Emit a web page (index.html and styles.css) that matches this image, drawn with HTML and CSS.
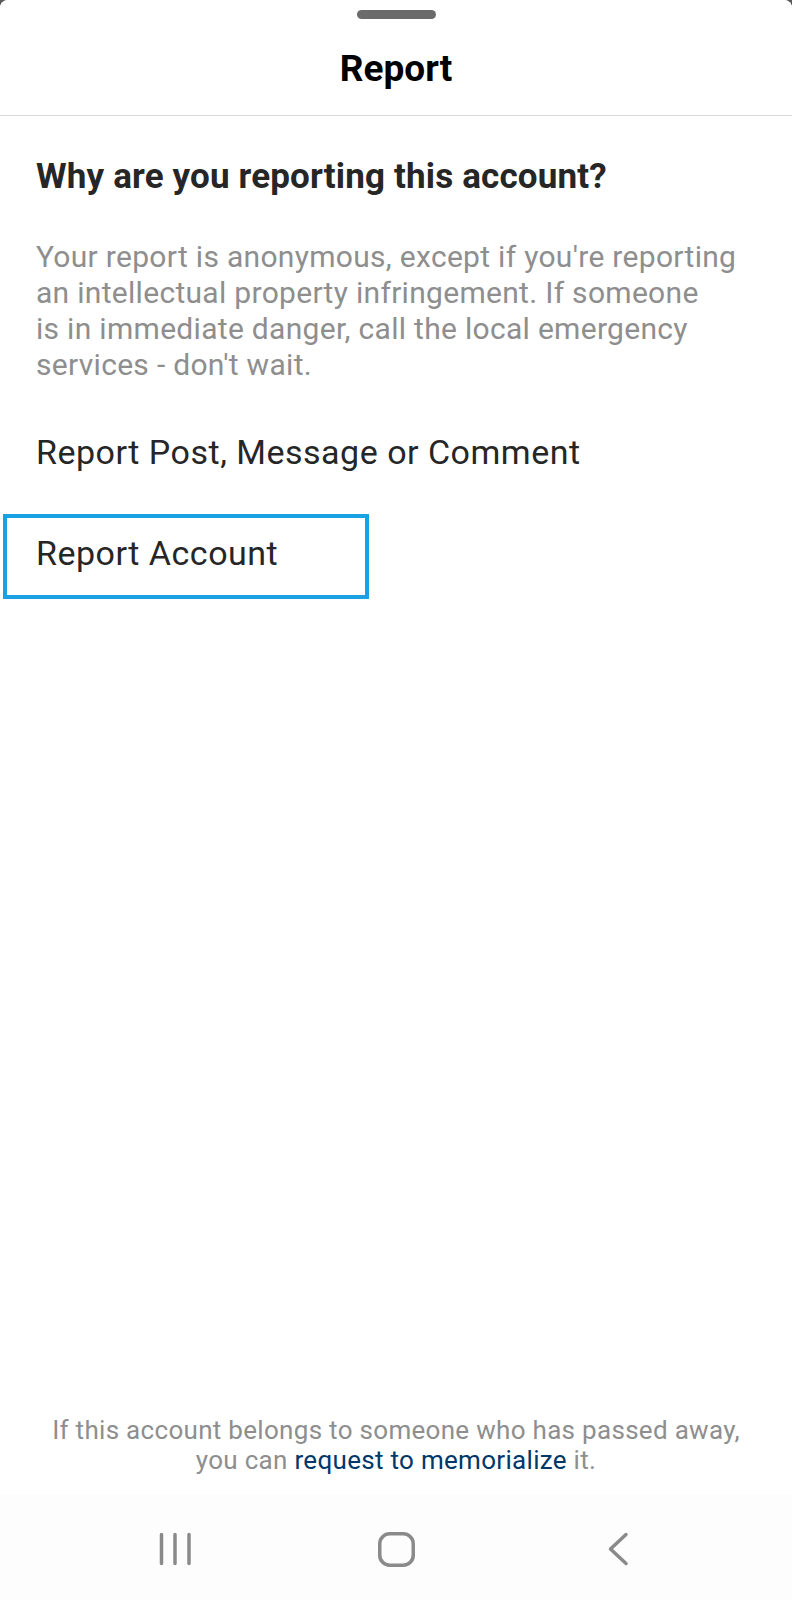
FILE: index.html
```html
<!DOCTYPE html>
<html>
<head>
<meta charset="utf-8">
<link rel="stylesheet" href="styles.css">
</head>
<body>
<div class="screen">
  <div class="sheet">
    <div class="handle-wrap"><div class="handle"></div></div>
    <div class="header"><h1 class="title">Report</h1></div>
    <div class="content">
      <h2 class="question">Why are you reporting this account?</h2>
      <p class="desc">Your report is anonymous, except if you're reporting<br>an intellectual property infringement. If someone<br>is in immediate danger, call the local emergency<br>services - don't wait.</p>
    </div>
    <div class="options">
      <div class="option">Report Post, Message or Comment</div>
      <div class="option option-selected">Report Account</div>
    </div>
    <div class="footer">
      <p class="footer-text">If this account belongs to someone who has passed away,<br>you can <a class="link" href="#">request to memorialize</a> it.</p>
    </div>
  </div>
  <nav class="navbar">
    <div class="nav-item">
      <svg width="40" height="40" viewBox="0 0 40 40"><g stroke="#8a8a8a" stroke-width="3.5" stroke-linecap="round" fill="none"><line x1="7.5" y1="5.5" x2="7.5" y2="34.5"/><line x1="21" y1="5.5" x2="21" y2="34.5"/><line x1="35" y1="5.5" x2="35" y2="34.5"/></g></svg>
    </div>
    <div class="nav-item">
      <svg width="40" height="40" viewBox="0 0 40 40"><rect x="3.75" y="4.75" width="33.5" height="31.5" rx="10" stroke="#8a8a8a" stroke-width="3.5" fill="none"/></svg>
    </div>
    <div class="nav-item">
      <svg width="40" height="40" viewBox="0 0 40 40"><polyline points="28,5.5 12.5,20 28,34.5" stroke="#8a8a8a" stroke-width="3.5" stroke-linecap="round" stroke-linejoin="round" fill="none"/></svg>
    </div>
  </nav>
</div>
</body>
</html>
```

FILE: styles.css
```css
* { box-sizing: border-box; }
html, body { margin: 0; padding: 0; }
body {
  background: #5a5a5a;
  font-family: Roboto, "Noto Sans", Arial, sans-serif;
}
.screen {
  width: 792px;
  height: 1600px;
  display: flex;
  flex-direction: column;
  background: #fdfdfd;
  border-radius: 8px 8px 0 0;
  overflow: hidden;
}
.sheet {
  flex: 1;
  display: flex;
  flex-direction: column;
  background: #ffffff;
}
.handle-wrap {
  padding-top: 10px;
  display: flex;
  justify-content: center;
}
.handle {
  width: 79px;
  height: 9px;
  border-radius: 5px;
  background: #6b6b6b;
}
.header {
  height: 97px;
  padding-top: 30px;
  border-bottom: 1px solid #dbdbdb;
  text-align: center;
}
.title {
  margin: 0;
  font-size: 37px;
  line-height: 40px;
  font-weight: 700;
  color: #000;
}
.content {
  padding: 0 36px;
}
.question {
  margin: 41px 0 0;
  font-size: 35px;
  line-height: 40px;
  font-weight: 700;
  letter-spacing: 0.15px;
  color: #262626;
}
.desc {
  margin: 42px 0 0;
  font-size: 30px;
  line-height: 36px;
  letter-spacing: 0.3px;
  color: #8e8e8e;
}
.options {
  margin-top: 49px;
  display: flex;
  flex-direction: column;
  gap: 42px;
}
.option {
  padding-left: 36px;
  font-size: 34px;
  line-height: 40px;
  letter-spacing: 0.5px;
  color: #262626;
}
.option-selected {
  margin-left: 3px;
  width: 366px;
  padding: 15px 0 22px 29px;
  border: 4px solid #1aa1e1;
}
.footer {
  margin-top: auto;
  padding-bottom: 20px;
  text-align: center;
}
.footer-text {
  margin: 0;
  font-size: 26px;
  line-height: 30px;
  letter-spacing: 0.3px;
  color: #8e8e8e;
}
.link {
  color: #00376b;
  text-decoration: none;
}
.navbar {
  height: 105px;
  background: #fdfdfd;
  display: flex;
  justify-content: center;
  align-items: center;
  gap: 182px;
  padding-top: 2px;
}
.nav-item {
  width: 40px;
  height: 40px;
}
.nav-item svg { display: block; }
```
